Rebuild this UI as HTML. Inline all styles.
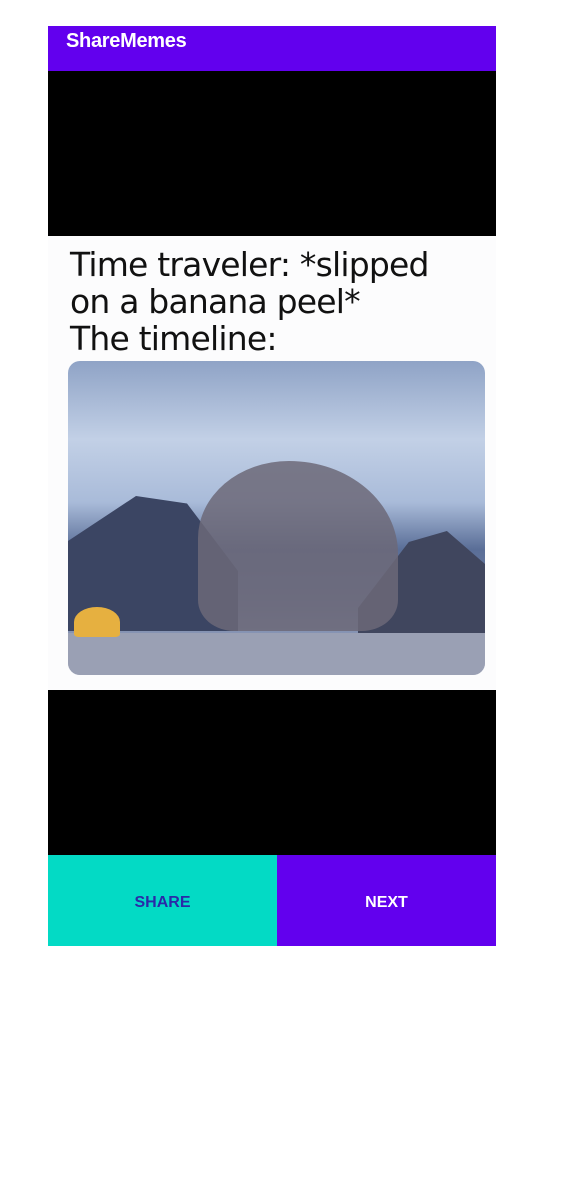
<!DOCTYPE html>
<html><head><meta charset="utf-8"><style>
*{margin:0;padding:0;box-sizing:border-box}
body{width:578px;height:1185px;background:#fff;position:relative;overflow:hidden;font-family:"Liberation Sans",sans-serif}
.a{position:absolute}
</style></head><body>
<div class="a" style="left:48px;top:26px;width:448px;height:45px;background:#6200EE"></div>
<div class="a" style="left:66px;top:29px;color:#fff;font-size:20px;line-height:24px;font-weight:bold;letter-spacing:-0.3px">ShareMemes</div>
<div class="a" style="left:48px;top:71px;width:448px;height:165px;background:#000"></div>
<div class="a" style="left:48px;top:236px;width:448px;height:454px;background:#fcfcfd"></div>
<div class="a" style="left:70px;top:246px;font-size:33px;line-height:37px;color:#111;font-family:'DejaVu Sans','Liberation Sans',sans-serif;letter-spacing:-0.8px">Time traveler: *slipped<br>on a banana peel*<br>The timeline:</div>
<div class="a" style="left:68px;top:361px;width:417px;height:314px;border-radius:12px;overflow:hidden;background:linear-gradient(180deg,#8fa3c6 0%,#c2d0e6 25%,#a9bbd9 45%,#5a6e97 60%,#6c7da3 75%,#8e9ab8 90%,#b2b9cc 100%)">
<div class="a" style="left:0;top:120px;width:170px;height:150px;background:#3b4563;clip-path:polygon(0 40%,40% 10%,70% 15%,100% 60%,100% 100%,0 100%)"></div>
<div class="a" style="left:290px;top:170px;width:127px;height:110px;background:#40465e;clip-path:polygon(0 70%,40% 10%,70% 0,100% 30%,100% 100%,0 100%)"></div>
<div class="a" style="left:130px;top:100px;width:200px;height:170px;background:#6c6878;border-radius:50% 60% 20% 20%;opacity:.85"></div>
<div class="a" style="left:0;top:272px;width:417px;height:42px;background:#9aa0b4"></div>
<div class="a" style="left:6px;top:246px;width:46px;height:30px;background:#e6b040;border-radius:50% 50% 10% 10%"></div>
</div>
<div class="a" style="left:48px;top:690px;width:448px;height:165px;background:#000"></div>
<div class="a" style="left:48px;top:855px;width:229px;height:91px;background:#03DAC5;color:#2a2aa8;font-size:16px;font-weight:bold;text-align:center;line-height:96px">SHARE</div>
<div class="a" style="left:277px;top:855px;width:219px;height:91px;background:#6200EE;color:#fff;font-size:16px;font-weight:bold;text-align:center;line-height:96px">NEXT</div>
</body></html>
